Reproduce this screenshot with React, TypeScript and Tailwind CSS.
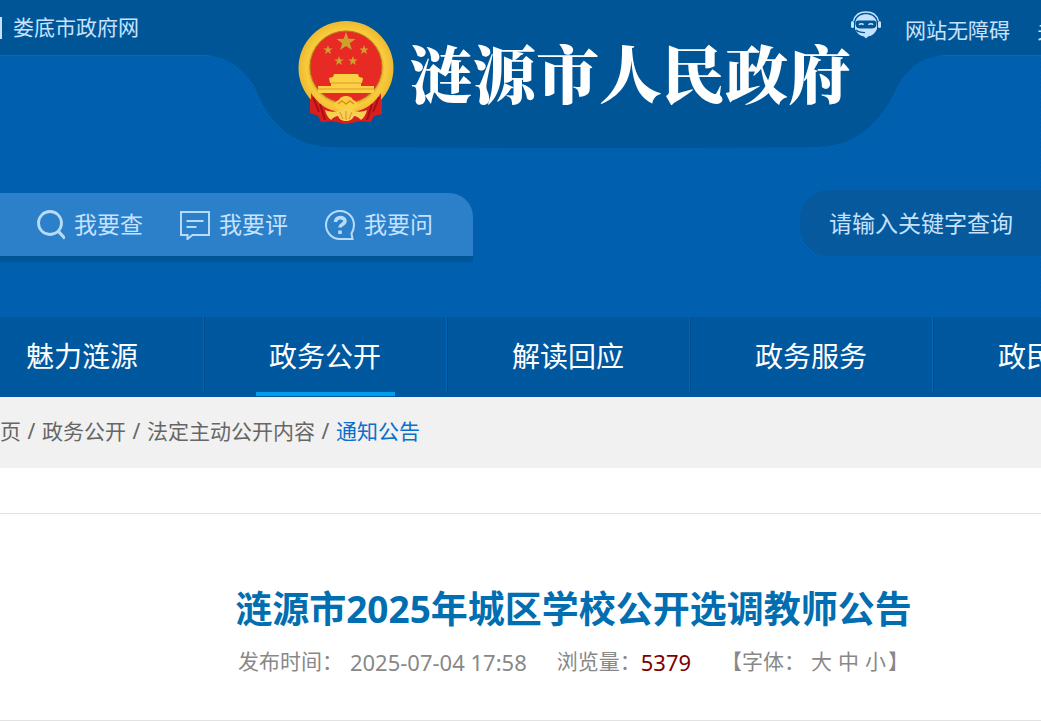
import type { ReactNode } from "react";

const quickLinks: { label: string; icon: ReactNode }[] = [
  {
    label: "我要查",
    icon: (
      <>
        <circle cx="15" cy="13" r="11.5" strokeWidth="2.8" />
        <path d="M23 21l7 7.5" strokeWidth="3.2" />
      </>
    ),
  },
  {
    label: "我要评",
    icon: (
      <>
        <path d="M1 2h28v23H12.500L7.500 29v-4H1z" strokeWidth="2" />
        <path d="M6.500 11h17M6.500 17h10" strokeWidth="2" />
      </>
    ),
  },
  {
    label: "我要问",
    icon: (
      <>
        <path
          d="M27.500 29H15.500A14 14 0 1 1 29 15c0 3-.6 5.500-2.500 8.500z"
          strokeWidth="2"
        />
        <path
          d="M10.500 12c0-6 9.500-5.500 9.500-.8 0 3-5 3-5 6.300"
          strokeWidth="3.600"
        />
        <path d="M15 20.500v3.500" strokeWidth="3.600" />
      </>
    ),
  },
];

const menu = ["魅力涟源", "政务公开", "解读回应", "政务服务", "政民互动"];

const Star = ({ x, y, r }: { x: number; y: number; r: number }) => (
  <path
    transform={`translate(${x} ${y}) scale(${r})`}
    d="M0-1L.24-.32.95-.31.38.12.59.81 0 .4-.59.81-.38.12-.95-.31-.24-.32z"
    fill="#cfa02e"
  />
);

const Emblem = () => (
  <svg viewBox="0 0 96 104" className="h-[104px] w-24 shrink-0" aria-hidden="true">
    <defs>
      <radialGradient id="gold" cx="50%" cy="50%" r="50%">
        <stop offset="72%" stopColor="#dda224" />
        <stop offset="82%" stopColor="#f8cc3c" />
        <stop offset="100%" stopColor="#eeb92f" />
      </radialGradient>
    </defs>
    {/* ribbon behind the wreath */}
    <path
      d="M12 72l4 4 12 8 20 3 20-3 12-8 4-4v22l-8 2-3 6-11-1-14 3-14-3-11 1-3-6-8-3z"
      fill="#d81e1e"
    />
    <ellipse cx="48" cy="48" rx="47.500" ry="47" fill="url(#gold)" />
    <circle cx="48" cy="47" r="36" fill="#e82a25" stroke="#b07a1c" strokeWidth="1" />
    <Star x={48} y={22} r={10} />
    <Star x={30} y={30} r={5} />
    <Star x={66} y={30} r={5} />
    <Star x={41} y={41} r={5} />
    <Star x={55} y={41} r={5} />
    <path
      d="M36 54h24l1 3 4 1-1 5H32l-1-5 4-1zM33 63h30v3h13v7H20v-7h13z"
      fill="#fbd044"
    />
    <path d="M33 63h30M20 69h56" stroke="#e09a2a" strokeWidth="1" />
    <path
      d="M13 73c5 8 12 14 20 17 10 3 20 3 30 0 8-3 15-9 20-17v21l-8 2-3 6-11-1-13 3-13-3-11 1-3-6-8-3z"
      fill="#d81e1e"
    />
    <path
      d="M15 77l6 15M22 84l5 16M81 77l-6 15M74 84l-5 16M36 92l-4 8M60 92l4 8"
      stroke="#a80f14"
      strokeWidth="2"
    />
    <path
      d="M35 84c3 0 3-4 6-4 1-3 4-4 7-4s6 1 7 4c3 0 3 4 6 4l-4 5c-6 2-12 2-18 0z"
      fill="#fbcf3d"
    />
    <path d="M40 84l4-3 4 3 4-3 4 3" fill="none" stroke="#dd8f22" strokeWidth="1.500" />
    <path
      d="M27 90c7 3 11 1 14 1 2-2 4-3 7-3s5 1 7 3c3 0 8 2 14-1-1 4-3 8-6 10-3-3-5-4-7-4-1 3-4 5-8 5s-7-2-8-5c-2 0-4 1-7 4-3-2-5-6-6-10z"
      fill="#f6cf54"
    />
    <path d="M42 92l3 7M54 92l-3 7M48 91v9" stroke="#d9951e" strokeWidth="1" />
  </svg>
);

const Robot = () => (
  <svg viewBox="0 0 30 28" className="h-7 w-[30px]" aria-hidden="true">
    <path d="M2.500 10C4 4 9 1 15 1s11 3 12.500 9" fill="none" stroke="#c6e2ff" strokeWidth="1.300" />
    <path d="M5 9C6.500 5.500 10 3.200 15 3.200S23.500 5.500 25 9l1 3v6c-2 4.500-5 7-9 7.500L15 27.500l-2-2C9 25 6 22.500 4 18v-6z" fill="#c6e2ff" />
    <rect x="0" y="10" width="3" height="7" rx="1.500" fill="#c6e2ff" />
    <rect x="27" y="10" width="3" height="7" rx="1.500" fill="#c6e2ff" />
    <path d="M8 9.500h14c3 0 4 2 3.500 4-.5 3-2 4-5 4h-11c-3 0-4.500-1-5-4C4 11.500 5 9.500 8 9.500z" fill="#005597" />
    <path d="M8 13.800c1.500-1.500 3.500-1.500 4.500 0M17.500 13.800c1.500-1.500 3.500-1.500 4.500 0" fill="none" stroke="#c6e2ff" strokeWidth="1.600" />
    <path d="M5 19c2 2 4 2.600 9 2.600" fill="none" stroke="#005597" strokeWidth="1.200" />
  </svg>
);

const Header = () => (
  <header className="relative overflow-hidden bg-[#0062b1] bg-[linear-gradient(45deg,#005dab_25%,transparent_25%,transparent_50%,#005dab_50%,#005dab_75%,transparent_75%)] bg-size-[4px_4px]">
    <div className="flex h-14 justify-between border-b border-[#0a69b8] bg-[#005597] text-[21px] leading-7 text-[#c6e2ff]">
      <div className="flex gap-[11px] pt-[13px]">
        <span className="mt-1 h-[22px] w-0.5 bg-[#c6e2ff]" />
        <a href="#">娄底市政府网</a>
      </div>
      <div className="-mr-[59px] flex shrink-0 gap-6 pt-[11px]">
        <Robot />
        <div className="flex gap-[27px] pt-[5px]">
          <a href="#">网站无障碍</a>
          <a href="#">关怀版</a>
        </div>
      </div>
    </div>

    {/* curved plate behind the site name, hangs over the top bar */}
    <div className="pointer-events-none absolute top-0 left-[calc(50%+54px)] w-[740px] -translate-x-1/2">
      <svg viewBox="0 0 740 148" className="absolute top-0 left-0 w-full" aria-hidden="true">
        <path
          d="M0 55C26 57 43 72 51 90C62 117 83 146 126 147Q370 149 612 147C655 146 678 117 690 91C700 70 715 57 740 55V50H0z"
          fill="#005597"
        />
      </svg>
      <a href="#" className="pointer-events-auto relative mx-auto flex w-fit gap-4 pt-5">
        <Emblem />
        <h1 className="pt-1.5 font-['Noto_Serif_CJK_SC','Noto_Sans_CJK_SC',serif] text-[63px] leading-[90px] font-black whitespace-nowrap text-white">
          涟源市人民政府
        </h1>
      </a>
    </div>

    <div className="mt-[134px] flex items-start justify-between">
      <div className="mt-[3px] flex gap-[37px] rounded-tr-3xl border-b-[6px] border-[#005597] bg-[#2c80c9] py-4 pr-10 pl-[35px]">
        {quickLinks.map((item) => (
          <a
            key={item.label}
            href="#"
            className="flex items-center gap-[9px] text-[23px] leading-[31px] text-[#c6e2ff]"
          >
            <svg viewBox="0 0 30 30" fill="none" stroke="#b9dbfa" className="size-[30px]" aria-hidden="true">
              {item.icon}
            </svg>
            {item.label}
          </a>
        ))}
      </div>
      <input
        type="search"
        aria-label="站内搜索"
        placeholder="请输入关键字查询"
        className="h-[66px] w-[241px] rounded-l-[30px] bg-[#05599c] pl-[29px] text-[23px] text-white outline-none placeholder:text-[#c6e2ff]"
      />
    </div>

    <nav className="mt-[55px] flex h-20 border-b border-[#00539c] bg-[#00559a]/75">
      <ul className="-ml-[39px] flex">
        {menu.map((label, i) => (
          <li
            key={label}
            className="flex h-[75px] w-[243px] shrink-0 justify-center border-r border-[#0467b5] shadow-[1px_0_0_#004b8d]"
          >
            <a
              href="#"
              className={
                i === 1
                  ? "h-[79px] w-[139px] border-b-4 border-[#009fe9] text-center text-[28px] leading-[78px] text-white"
                  : "h-[79px] w-[139px] text-center text-[28px] leading-[78px] text-white"
              }
            >
              {label}
            </a>
          </li>
        ))}
      </ul>
    </nav>
  </header>
);

const Breadcrumb = () => (
  <div className="overflow-hidden bg-[#f1f1f1]">
    <div className="-ml-[21px] flex h-[71px] items-center pb-0.5 text-[21px] whitespace-nowrap text-[#666]">
      <a href="#">首页</a>
      <span className="w-[21px] text-center">/</span>
      <a href="#">政务公开</a>
      <span className="w-[21px] text-center">/</span>
      <a href="#">法定主动公开内容</a>
      <span className="w-[21px] text-center">/</span>
      <a href="#" className="text-[#0a6fcb]">
        通知公告
      </a>
    </div>
  </div>
);

const Article = () => (
  <main className="mt-[45px] border-y border-[#e2e2e2] pt-[68px] pb-[42px] pl-[106px] text-center">
    <h2 className="text-[37px] leading-[54px] font-bold text-[#006eb0]">
      涟源市2025年城区学校公开选调教师公告
    </h2>
    <div className="mt-2.5 flex h-8 items-center justify-center text-[21px] whitespace-nowrap text-[#888]">
      <span>发布时间：</span>
      <span className="ml-[7px] text-[22px]">2025-07-04 17:58</span>
      <span className="ml-[30px]">浏览量：</span>
      <span className="text-[22px] text-[#800000]">5379</span>
      <span className="ml-[30px]">【字体：</span>
      <div className="mr-0.5 ml-1.5 flex gap-1.5">
        <button type="button">大</button>
        <button type="button">中</button>
        <button type="button">小</button>
      </div>
      <span>】</span>
    </div>
  </main>
);

const App = () => {
  return (
    <div className="min-h-screen overflow-hidden bg-white font-['Noto_Sans','Noto_Sans_CJK_SC',sans-serif]">
      <Header />
      <Breadcrumb />
      <Article />
    </div>
  );
};

export default App;
